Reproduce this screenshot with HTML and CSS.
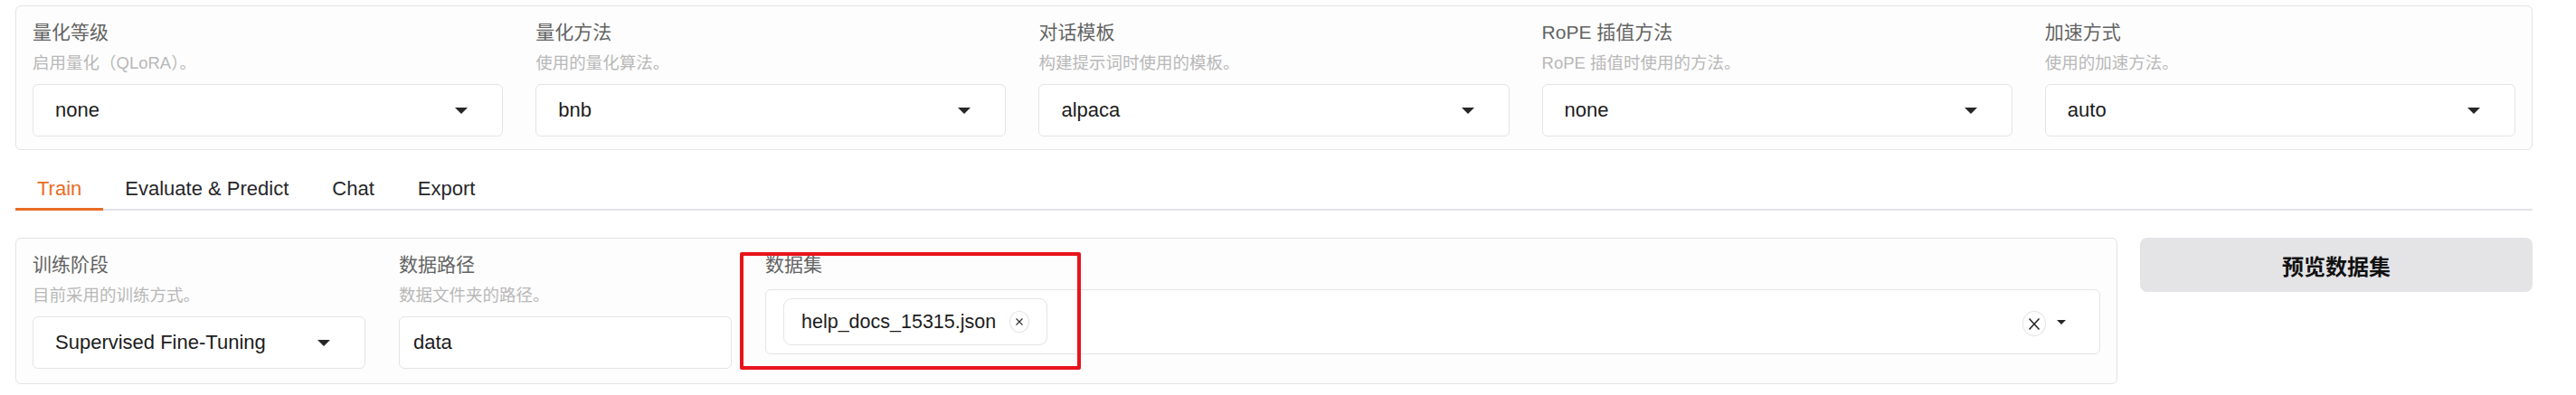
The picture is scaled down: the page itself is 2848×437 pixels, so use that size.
FILE: index.html
```html
<!DOCTYPE html>
<html lang="zh">
<head>
<meta charset="utf-8">
<title>LLaMA Board</title>
<link rel="stylesheet" href="styles.css">
</head>
<body>
<div class="page">
  <div class="panel top-panel">
    <div class="field">
      <div class="field-label">量化等级</div>
      <div class="field-info">启用量化（QLoRA）。</div>
      <div class="select"><span class="value">none</span><span class="caret"></span></div>
    </div>
    <div class="field">
      <div class="field-label">量化方法</div>
      <div class="field-info">使用的量化算法。</div>
      <div class="select"><span class="value">bnb</span><span class="caret"></span></div>
    </div>
    <div class="field">
      <div class="field-label">对话模板</div>
      <div class="field-info">构建提示词时使用的模板。</div>
      <div class="select"><span class="value">alpaca</span><span class="caret"></span></div>
    </div>
    <div class="field">
      <div class="field-label">RoPE 插值方法</div>
      <div class="field-info">RoPE 插值时使用的方法。</div>
      <div class="select"><span class="value">none</span><span class="caret"></span></div>
    </div>
    <div class="field">
      <div class="field-label">加速方式</div>
      <div class="field-info">使用的加速方法。</div>
      <div class="select"><span class="value">auto</span><span class="caret"></span></div>
    </div>
  </div>

  <div class="tabs">
    <div class="tab active">Train</div>
    <div class="tab">Evaluate &amp; Predict</div>
    <div class="tab">Chat</div>
    <div class="tab">Export</div>
  </div>

  <div class="bottom">
    <div class="panel bottom-panel">
      <div class="field">
        <div class="field-label">训练阶段</div>
        <div class="field-info">目前采用的训练方式。</div>
        <div class="select"><span class="value">Supervised Fine-Tuning</span><span class="caret"></span></div>
      </div>
      <div class="field">
        <div class="field-label">数据路径</div>
        <div class="field-info">数据文件夹的路径。</div>
        <div class="select textbox"><span class="value">data</span></div>
      </div>
      <div class="field dataset">
        <div class="field-label">数据集</div>
        <div class="multi">
          <div class="chips">
            <div class="chip">
              <span>help_docs_15315.json</span>
              <span class="chip-x"><svg width="10" height="10" viewBox="0 0 10 10"><path d="M1.5 1.5 L8.5 8.5 M8.5 1.5 L1.5 8.5" stroke="#333" stroke-width="1.2" fill="none"/></svg></span>
            </div>
          </div>
          <span class="clear-x"><svg width="14" height="15" viewBox="0 0 14 15"><path d="M1.5 1.5 L12.5 13.5 M12.5 1.5 L1.5 13.5" stroke="#222" stroke-width="1.5" fill="none"/></svg></span>
          <span class="caret small"></span>
        </div>
        <div class="annot"></div>
      </div>
    </div>
    <div class="btn">预览数据集</div>
  </div>
</div>
</body>
</html>
```
FILE: styles.css
```css
body {
  margin: 0;
  background: #ffffff;
  font-family: "Liberation Sans", "Noto Sans CJK SC", sans-serif;
}

.page {
  width: 2783px;
  margin-left: 17px;
  padding-top: 6px;
}

.panel {
  border: 1px solid #e4e4e7;
  border-radius: 6px;
  background: #fdfdfd;
}

.top-panel {
  display: grid;
  grid-template-columns: repeat(5, 1fr);
  column-gap: 36px;
  padding: 16px 18px 14px;
}

.field-label {
  font-size: 21px;
  line-height: 26px;
  color: #636363;
  white-space: nowrap;
}

.field-info {
  margin-top: 10px;
  font-size: 18.5px;
  line-height: 22px;
  color: #b8b8b8;
  white-space: nowrap;
}

.select {
  margin-top: 12px;
  height: 58px;
  box-sizing: border-box;
  border: 1px solid #e4e4e7;
  border-radius: 6px;
  background: #ffffff;
  display: flex;
  align-items: center;
  padding: 0 38px 0 24px;
  font-size: 22px;
  color: #1c1c1c;
}

.select .value {
  flex: 1;
  white-space: nowrap;
}

.select.textbox {
  padding-left: 15px;
}

.caret {
  width: 0;
  height: 0;
  border-left: 7px solid transparent;
  border-right: 7px solid transparent;
  border-top: 7px solid #262626;
}

.caret.small {
  border-left-width: 5.5px;
  border-right-width: 5.5px;
  border-top-width: 5px;
}

.tabs {
  margin-top: 30px;
  display: flex;
  border-bottom: 2px solid #e4e4e7;
}

.tab {
  font-size: 22px;
  line-height: 26px;
  padding: 0 24px 8px;
  color: #27272a;
  white-space: nowrap;
}

.tab.active {
  color: #ea6c23;
  border-bottom: 3px solid #ea6c23;
  margin-bottom: -2px;
}

.bottom {
  margin-top: 30px;
  display: grid;
  grid-template-columns: 1fr 434px;
  column-gap: 25px;
  align-items: start;
}

.bottom-panel {
  display: grid;
  grid-template-columns: 368px 368px 1fr;
  column-gap: 37px;
  padding: 16px 18px 16px;
}

.dataset {
  position: relative;
}

.multi {
  margin-top: 14px;
  height: 72px;
  box-sizing: border-box;
  border: 1px solid #e4e4e7;
  border-radius: 6px;
  background: #ffffff;
  display: flex;
  align-items: center;
  padding: 0 37px 0 19px;
}

.chips {
  flex: 1;
  display: flex;
}

.chip {
  height: 52px;
  box-sizing: border-box;
  border: 1px solid #e4e4e7;
  border-radius: 9px;
  display: flex;
  align-items: center;
  gap: 15px;
  padding: 0 19px;
  font-size: 21.5px;
  color: #1c1c1c;
  background: #ffffff;
}

.chip-x {
  width: 22px;
  height: 24px;
  box-sizing: border-box;
  border: 1px solid #e4e4e7;
  border-radius: 50%;
  display: flex;
  align-items: center;
  justify-content: center;
}

.clear-x {
  width: 26px;
  height: 28px;
  box-sizing: border-box;
  border: 1px solid #e4e4e7;
  border-radius: 50%;
  display: flex;
  align-items: center;
  justify-content: center;
  margin-right: 12px;
  margin-top: 4px;
}

.annot {
  position: absolute;
  left: -28px;
  top: -1px;
  width: 377px;
  height: 130px;
  box-sizing: border-box;
  border: 4px solid #e8141c;
  border-radius: 2px;
}

.btn {
  height: 60px;
  border-radius: 8px;
  background: #e4e4e7;
  display: flex;
  align-items: center;
  justify-content: center;
  font-size: 24px;
  font-weight: 700;
  color: #111111;
}
```
